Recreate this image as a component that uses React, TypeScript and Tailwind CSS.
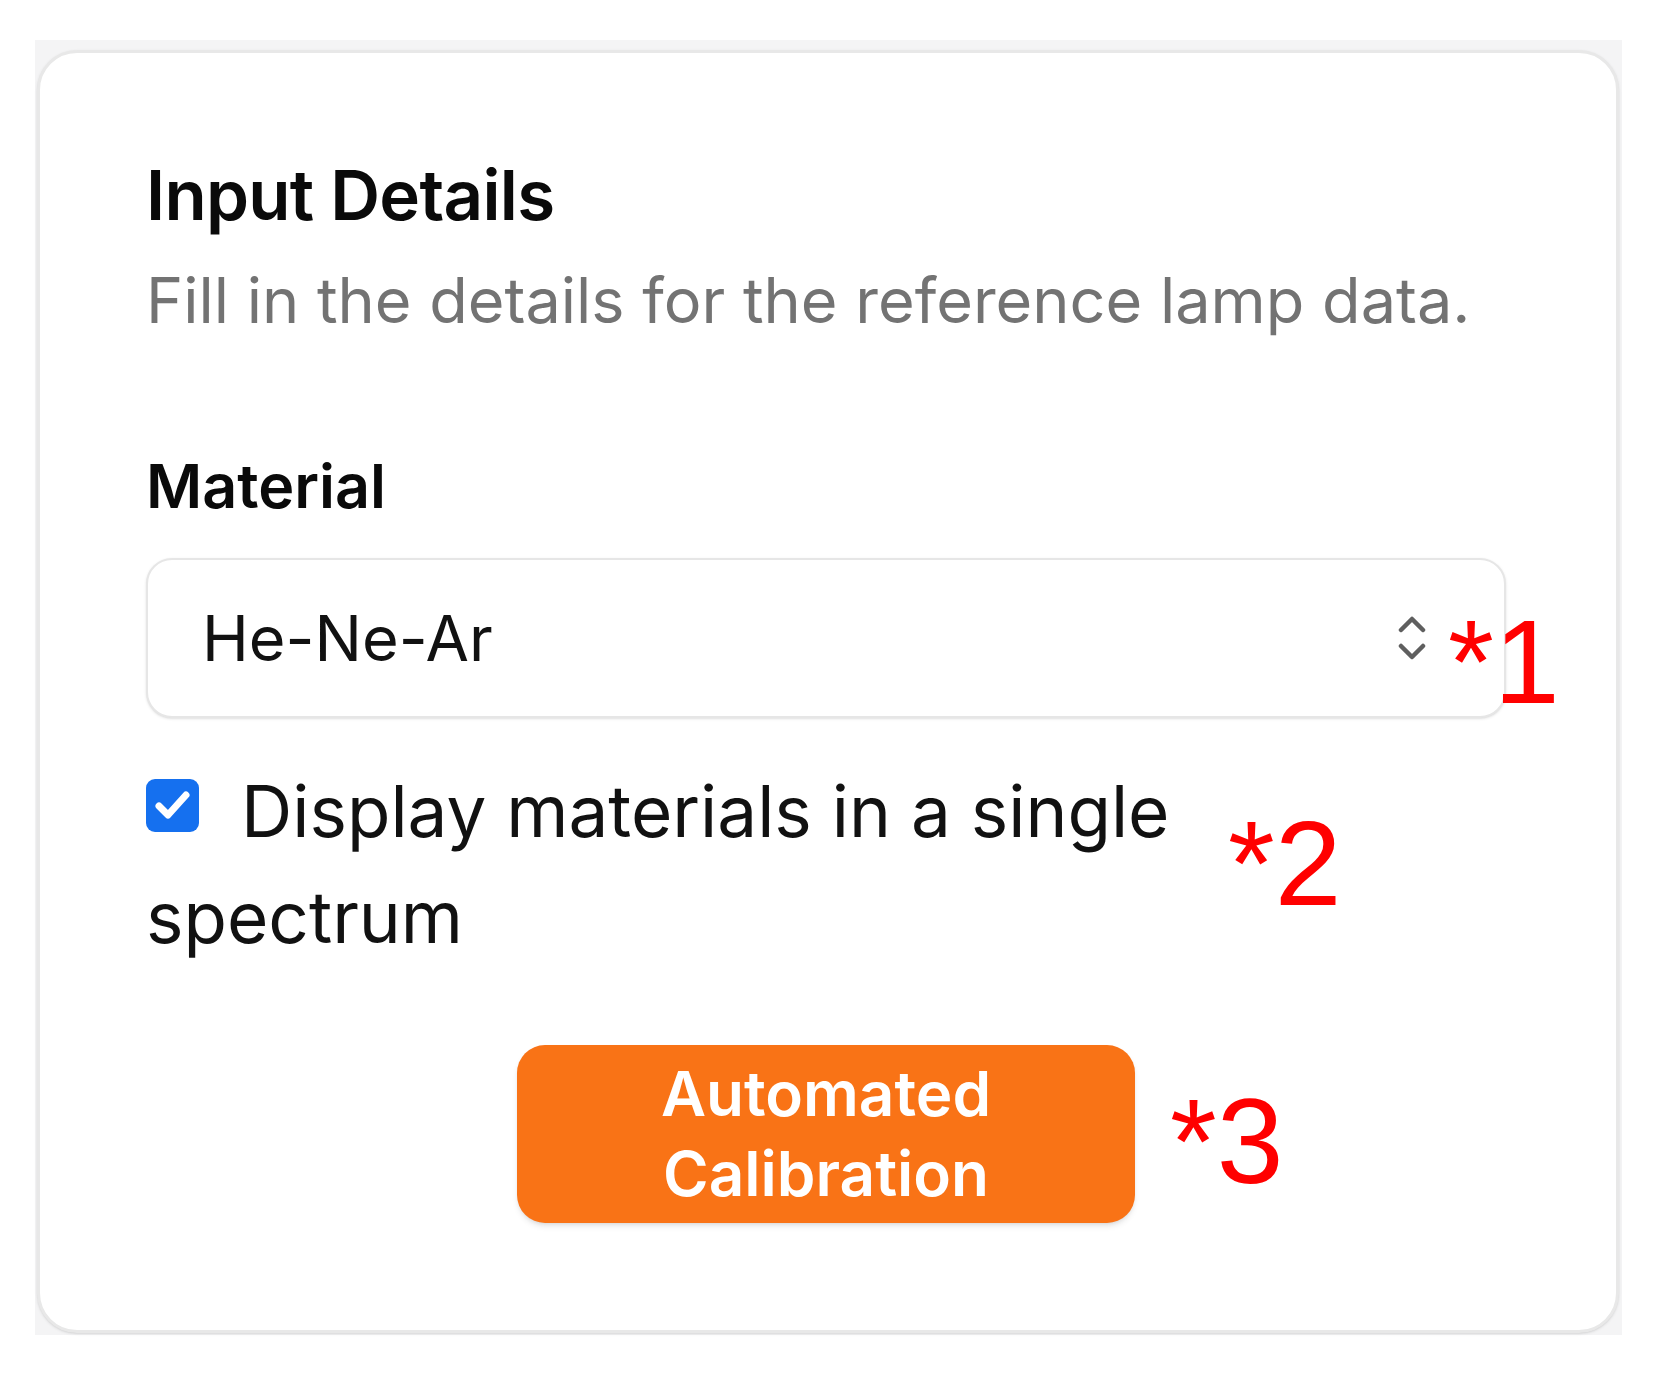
import React from "react";

const INTER = "font-['Inter','Noto_Sans',sans-serif]";
const ARIAL = "font-['Liberation_Sans','Arial',sans-serif]";

function UpDownIcon() {
  return (
    <svg width="28" height="46" viewBox="0 0 28 46" fill="none" aria-hidden="true">
      <path d="M3 15 L14 4 L25 15" stroke="#5f5f5f" strokeWidth="4.5" strokeLinecap="round" strokeLinejoin="round" />
      <path d="M3 31 L14 42 L25 31" stroke="#5f5f5f" strokeWidth="4.5" strokeLinecap="round" strokeLinejoin="round" />
    </svg>
  );
}

function CheckMark() {
  return (
    <svg width="53" height="53" viewBox="0 0 53 53" fill="none" aria-hidden="true">
      <path d="M13 27 L22 36 L40 16" stroke="#ffffff" strokeWidth="7" strokeLinecap="round" strokeLinejoin="round" />
    </svg>
  );
}

export default function App() {
  return (
    <div className={`relative h-[1376px] w-[1664px] bg-white pl-[35px] pt-[40px] ${INTER}`}>
      <div className="w-[1587px] bg-[#f4f4f5] pb-[2px] pl-[2px] pr-[3px] pt-[10px]">
        <div className="rounded-[40px] border-[3px] border-[#e8e8e8] bg-white pb-[107px] pl-[106px] pr-[110px] pt-[100px] shadow-sm">
          <h2 className="text-[69px] font-semibold leading-[84px] tracking-[-0.01em] text-[#0a0a0a]">Input Details</h2>
          <p className="mt-[23px] text-[63px] leading-[80px] text-[#737373]">
            Fill in the details for the reference lamp data.
          </p>

          <div className="mt-[108px] text-[61px] font-semibold leading-[76px] text-[#0a0a0a]">Material</div>

          <div className="mt-[34px] flex h-[160px] items-center justify-between rounded-[26px] border-2 border-[#e6e6e6] bg-white pl-[54px] pr-[78px] shadow-sm">
            <span className="text-[63px] leading-[80px] text-[#111111]">He-Ne-Ar</span>
            <UpDownIcon />
          </div>

          <label className="mt-[40px] block max-w-[1150px] text-[71px] leading-[106px] text-[#111111]">
            <span className="mb-[5px] mr-[42px] inline-block h-[53px] w-[53px] rounded-[9px] bg-[#1570ef] align-baseline">
              <CheckMark />
            </span>
            Display materials in a single spectrum
          </label>

          <div className="mt-[75px] flex justify-center">
            <button className="flex h-[178px] w-[618px] items-center justify-center rounded-[28px] bg-[#f97316] px-[40px] text-center text-[62px] font-semibold leading-[80px] text-white shadow-md">
              Automated Calibration
            </button>
          </div>
        </div>
      </div>

      <span className={`absolute left-[1448px] top-[602px] text-[118px] leading-[120px] text-[#ff0000] ${ARIAL}`}>*1</span>
      <span className={`absolute left-[1228px] top-[803px] text-[120px] leading-[120px] text-[#ff0000] ${ARIAL}`}>*2</span>
      <span className={`absolute left-[1170px] top-[1081px] text-[120px] leading-[120px] text-[#ff0000] ${ARIAL}`}>*3</span>
    </div>
  );
}
